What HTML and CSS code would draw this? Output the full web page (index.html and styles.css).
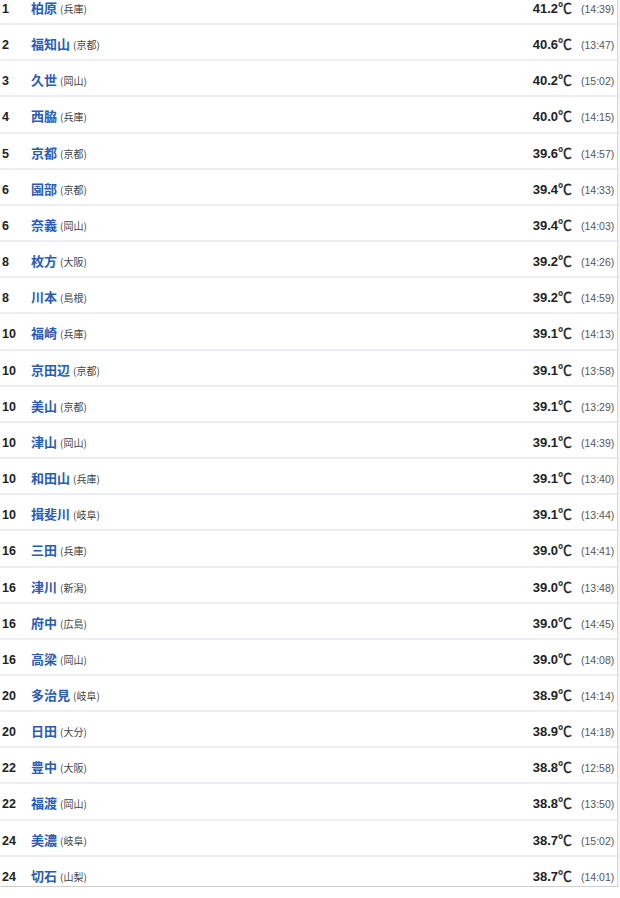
FILE: index.html
```html
<!DOCTYPE html>
<html>
<head>
    <title>最高気温ランキング</title>
    <meta charset="utf-8">
    <link rel="stylesheet" href="styles.css">
</head>
<body>
    <div class="ranking-box">
        <ul class="ranking" id="ranking"></ul>
    </div>

    <script>
        const rows = [
            ['1', '柏原', '兵庫', '41.2', '14:39'],
            ['2', '福知山', '京都', '40.6', '13:47'],
            ['3', '久世', '岡山', '40.2', '15:02'],
            ['4', '西脇', '兵庫', '40.0', '14:15'],
            ['5', '京都', '京都', '39.6', '14:57'],
            ['6', '園部', '京都', '39.4', '14:33'],
            ['6', '奈義', '岡山', '39.4', '14:03'],
            ['8', '枚方', '大阪', '39.2', '14:26'],
            ['8', '川本', '島根', '39.2', '14:59'],
            ['10', '福崎', '兵庫', '39.1', '14:13'],
            ['10', '京田辺', '京都', '39.1', '13:58'],
            ['10', '美山', '京都', '39.1', '13:29'],
            ['10', '津山', '岡山', '39.1', '14:39'],
            ['10', '和田山', '兵庫', '39.1', '13:40'],
            ['10', '揖斐川', '岐阜', '39.1', '13:44'],
            ['16', '三田', '兵庫', '39.0', '14:41'],
            ['16', '津川', '新潟', '39.0', '13:48'],
            ['16', '府中', '広島', '39.0', '14:45'],
            ['16', '高梁', '岡山', '39.0', '14:08'],
            ['20', '多治見', '岐阜', '38.9', '14:14'],
            ['20', '日田', '大分', '38.9', '14:18'],
            ['22', '豊中', '大阪', '38.8', '12:58'],
            ['22', '福渡', '岡山', '38.8', '13:50'],
            ['24', '美濃', '岐阜', '38.7', '15:02'],
            ['24', '切石', '山梨', '38.7', '14:01']
        ];

        document.getElementById('ranking').innerHTML = rows.map(r => `
            <li class="rank-row">
                <span class="rank">${r[0]}</span>
                <span class="place"><a class="place-name" href="#">${r[1]}</a><span class="pref">(${r[2]})</span></span>
                <span class="temp">${r[3]}<span class="unit">℃</span></span>
                <span class="time">(${r[4]})</span>
            </li>
        `).join('');
    </script>
</body>
</html>
```

FILE: styles.css
```css
body {
    margin: 0;
    background: #fff;
    font-family: "Liberation Sans", Arial, "Noto Sans CJK JP", sans-serif;
    color: #222;
}
.ranking-box {
    width: 617px;
    height: 886px;
    overflow: hidden;
    border-right: 1px solid #d8d8d8;
    border-bottom: 1px solid #cfcfcf;
    box-shadow: 1px 1px 2px rgba(0, 0, 0, 0.08);
}
.ranking {
    list-style: none;
    margin: -11px 0 0;
    padding: 0;
}
.rank-row {
    display: flex;
    align-items: baseline;
    height: 36.17px;
    box-sizing: border-box;
    padding: 10px 4px 0 0;
    line-height: 16px;
    border-bottom: 2px solid #eceef4;
}
.rank {
    width: 29px;
    padding-left: 2px;
    font-size: 12.5px;
    font-weight: bold;
    color: #222;
}
.place {
    flex: 1;
}
.place-name {
    font-size: 13px;
    font-weight: bold;
    color: #2a5cb3;
    text-decoration: none;
    font-family: "Noto Sans CJK JP", sans-serif;
}
.pref {
    font-size: 10px;
    color: #444;
    margin-left: 3px;
    font-family: "Noto Sans CJK JP", sans-serif;
}
.temp {
    font-size: 13px;
    font-weight: bold;
    color: #222;
}
.unit {
    font-family: "Noto Sans CJK JP", sans-serif;
    font-size: 14px;
    font-weight: normal;
    -webkit-text-stroke: 0.3px #222;
}
.time {
    font-size: 10.5px;
    color: #555;
    margin-left: 9px;
    width: 32px;
}
```
